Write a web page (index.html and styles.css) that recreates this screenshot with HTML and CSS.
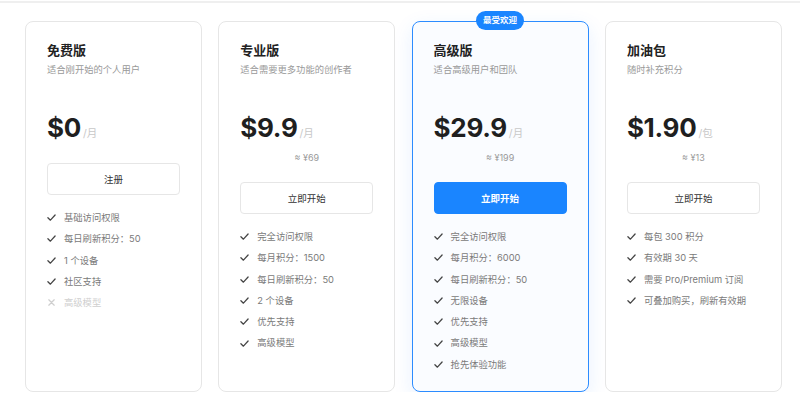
FILE: index.html
```html
<!DOCTYPE html>
<html lang="zh-CN">
<head>
    <meta charset="UTF-8">
    <meta name="viewport" content="width=device-width, initial-scale=1.0">
    <title>价格方案</title>
    <link rel="stylesheet" href="styles.css">
</head>
<body>

<div class="page">
    <div class="plans">

        <!-- 免费版 -->
        <div class="plan">
            <h3 class="plan-name">免费版</h3>
            <p class="plan-desc">适合刚开始的个人用户</p>
            <div class="plan-price"><span class="amount">$0</span><span class="unit">/月</span></div>
            <button class="btn">注册</button>
            <ul class="features">
                <li><svg class="icon" viewBox="0 0 10 10"><polyline points="1,5.2 3.8,8 9,2.2"/></svg>基础访问权限</li>
                <li><svg class="icon" viewBox="0 0 10 10"><polyline points="1,5.2 3.8,8 9,2.2"/></svg>每日刷新积分：50</li>
                <li><svg class="icon" viewBox="0 0 10 10"><polyline points="1,5.2 3.8,8 9,2.2"/></svg>1 个设备</li>
                <li><svg class="icon" viewBox="0 0 10 10"><polyline points="1,5.2 3.8,8 9,2.2"/></svg>社区支持</li>
                <li class="off"><svg class="icon" viewBox="0 0 10 10"><path d="M2 2 L8 8 M8 2 L2 8"/></svg>高级模型</li>
            </ul>
        </div>

        <!-- 专业版 -->
        <div class="plan">
            <h3 class="plan-name">专业版</h3>
            <p class="plan-desc">适合需要更多功能的创作者</p>
            <div class="plan-price"><span class="amount">$9.9</span><span class="unit">/月</span></div>
            <div class="plan-approx">≈ ¥69</div>
            <button class="btn">立即开始</button>
            <ul class="features">
                <li><svg class="icon" viewBox="0 0 10 10"><polyline points="1,5.2 3.8,8 9,2.2"/></svg>完全访问权限</li>
                <li><svg class="icon" viewBox="0 0 10 10"><polyline points="1,5.2 3.8,8 9,2.2"/></svg>每月积分：1500</li>
                <li><svg class="icon" viewBox="0 0 10 10"><polyline points="1,5.2 3.8,8 9,2.2"/></svg>每日刷新积分：50</li>
                <li><svg class="icon" viewBox="0 0 10 10"><polyline points="1,5.2 3.8,8 9,2.2"/></svg>2 个设备</li>
                <li><svg class="icon" viewBox="0 0 10 10"><polyline points="1,5.2 3.8,8 9,2.2"/></svg>优先支持</li>
                <li><svg class="icon" viewBox="0 0 10 10"><polyline points="1,5.2 3.8,8 9,2.2"/></svg>高级模型</li>
            </ul>
        </div>

        <!-- 高级版 -->
        <div class="plan plan-featured">
            <span class="badge">最受欢迎</span>
            <h3 class="plan-name">高级版</h3>
            <p class="plan-desc">适合高级用户和团队</p>
            <div class="plan-price"><span class="amount">$29.9</span><span class="unit">/月</span></div>
            <div class="plan-approx">≈ ¥199</div>
            <button class="btn btn-primary">立即开始</button>
            <ul class="features">
                <li><svg class="icon" viewBox="0 0 10 10"><polyline points="1,5.2 3.8,8 9,2.2"/></svg>完全访问权限</li>
                <li><svg class="icon" viewBox="0 0 10 10"><polyline points="1,5.2 3.8,8 9,2.2"/></svg>每月积分：6000</li>
                <li><svg class="icon" viewBox="0 0 10 10"><polyline points="1,5.2 3.8,8 9,2.2"/></svg>每日刷新积分：50</li>
                <li><svg class="icon" viewBox="0 0 10 10"><polyline points="1,5.2 3.8,8 9,2.2"/></svg>无限设备</li>
                <li><svg class="icon" viewBox="0 0 10 10"><polyline points="1,5.2 3.8,8 9,2.2"/></svg>优先支持</li>
                <li><svg class="icon" viewBox="0 0 10 10"><polyline points="1,5.2 3.8,8 9,2.2"/></svg>高级模型</li>
                <li><svg class="icon" viewBox="0 0 10 10"><polyline points="1,5.2 3.8,8 9,2.2"/></svg>抢先体验功能</li>
            </ul>
        </div>

        <!-- 加油包 -->
        <div class="plan">
            <h3 class="plan-name">加油包</h3>
            <p class="plan-desc">随时补充积分</p>
            <div class="plan-price"><span class="amount">$1.90</span><span class="unit">/包</span></div>
            <div class="plan-approx">≈ ¥13</div>
            <button class="btn">立即开始</button>
            <ul class="features">
                <li><svg class="icon" viewBox="0 0 10 10"><polyline points="1,5.2 3.8,8 9,2.2"/></svg>每包 300 积分</li>
                <li><svg class="icon" viewBox="0 0 10 10"><polyline points="1,5.2 3.8,8 9,2.2"/></svg>有效期 30 天</li>
                <li><svg class="icon" viewBox="0 0 10 10"><polyline points="1,5.2 3.8,8 9,2.2"/></svg>需要 Pro/Premium 订阅</li>
                <li><svg class="icon" viewBox="0 0 10 10"><polyline points="1,5.2 3.8,8 9,2.2"/></svg>可叠加购买，刷新有效期</li>
            </ul>
        </div>

    </div>
</div>

</body>
</html>
```

FILE: styles.css
```css
/* Général */
body {
    margin: 0;
    padding: 0;
    background: #fff;
    color: #333;
    font-family: Inter, "Noto Sans CJK SC", sans-serif;
}

.page {
    margin-top: 1px;
    border-top: 2px solid #efefef;
    padding: 18px 0 0 25px;
}

.plans {
    display: grid;
    grid-template-columns: repeat(4, 177px);
    column-gap: 16.3px;
    align-items: stretch;
}

/* Carte */
.plan {
    position: relative;
    display: flex;
    flex-direction: column;
    border: 1px solid #e6e6e6;
    border-radius: 8px;
    padding: 17px 21px 16px;
    background: #fff;
}

.plan-featured {
    border-color: #2c8cff;
    background: #fafcff;
    box-shadow: 0 6px 20px rgba(30, 120, 255, 0.1);
}

.badge {
    position: absolute;
    top: -11px;
    left: 50%;
    transform: translateX(-50%);
    background: #1a85ff;
    color: #fff;
    font-size: 8.5px;
    font-weight: 700;
    line-height: 19px;
    padding: 0 7px;
    border-radius: 10px;
    white-space: nowrap;
}

.plan-name {
    margin: 0;
    font-size: 13px;
    line-height: 22px;
    font-weight: 600;
    color: #222;
}

.plan-desc {
    margin: 2px 0 0;
    font-size: 9.3px;
    line-height: 14px;
    color: #999;
}

.plan-price {
    margin-top: 33px;
    height: 36px;
    line-height: 36px;
    display: flex;
    align-items: baseline;
}

.amount {
    font-size: 26px;
    font-weight: 700;
    color: #1f1f1f;
    letter-spacing: -0.3px;
}

.unit {
    font-size: 10.5px;
    color: #c8c8c8;
    margin-left: 2px;
}

.plan-approx {
    margin-top: 4px;
    text-align: center;
    font-size: 9px;
    line-height: 16px;
    color: #999;
}

/* Boutons */
.btn {
    margin-top: 17px;
    height: 32px;
    width: 100%;
    border: 1px solid #e6e6e6;
    border-radius: 4px;
    background: #fff;
    color: #333;
    font-family: inherit;
    font-size: 9.5px;
    cursor: pointer;
}

.plan-approx + .btn {
    margin-top: 16px;
}

.btn-primary {
    background: #1a85ff;
    border-color: #1a85ff;
    color: #fff;
    font-weight: 600;
}

/* Liste */
.features {
    list-style: none;
    margin: 12px 0 0;
    padding: 0;
}

.features li {
    display: flex;
    align-items: center;
    font-size: 9.3px;
    line-height: 21.3px;
    color: #7a7a7a;
    white-space: nowrap;
}

.icon {
    width: 9px;
    height: 9px;
    margin-right: 8px;
    flex-shrink: 0;
    fill: none;
    stroke: #444;
    stroke-width: 1.4;
    stroke-linecap: round;
    stroke-linejoin: round;
}

.features li.off {
    color: #cfcfcf;
}

.features li.off .icon {
    stroke: #cfcfcf;
}
```
